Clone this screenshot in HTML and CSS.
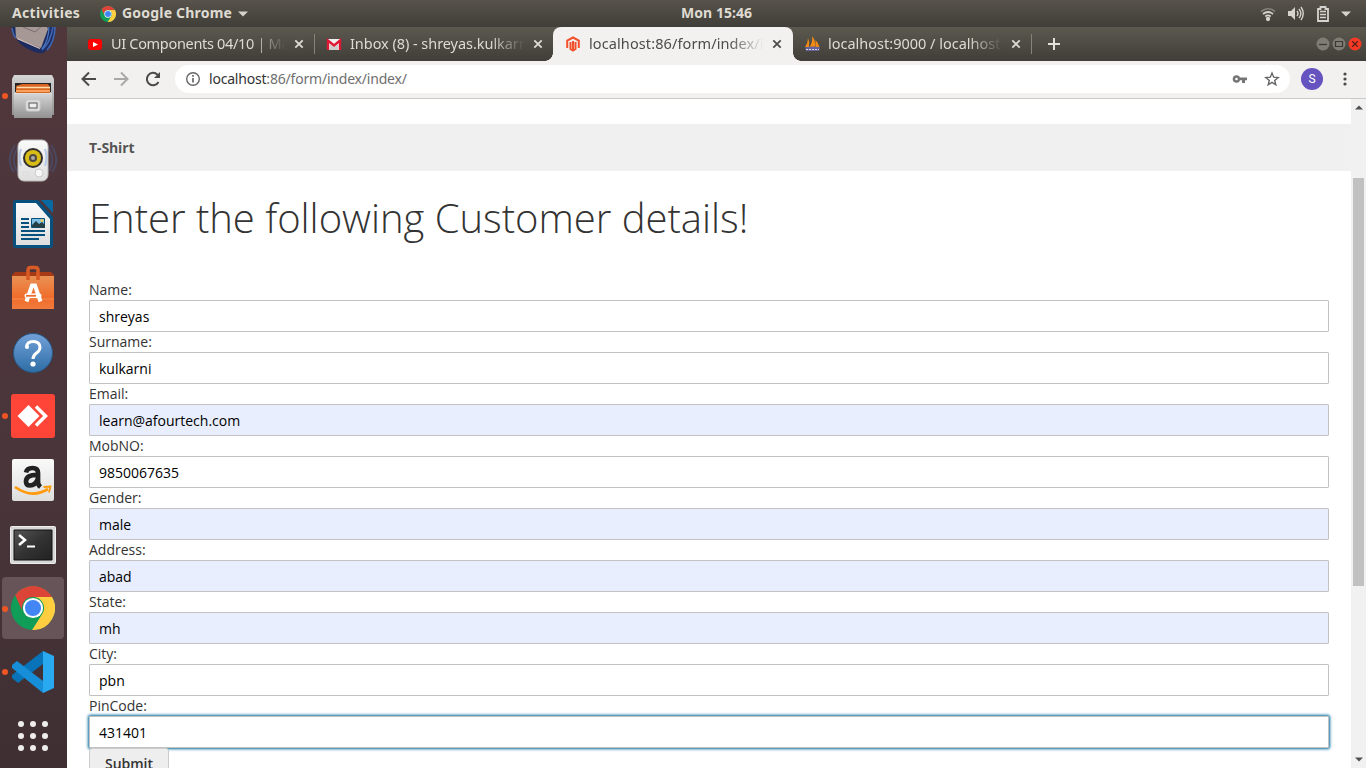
FILE: index.html
```html
<!DOCTYPE html>
<html lang="en">
<head>
<meta charset="utf-8">
<title>Customer details</title>
<link rel="stylesheet" href="styles.css">
</head>
<body>
<svg class="defs" width="0" height="0" aria-hidden="true">
  <defs>
    <linearGradient id="metal" x2="0" y2="1"><stop stop-color="#d6d6d6"/><stop offset="1" stop-color="#929292"/></linearGradient>
    <linearGradient id="blue" x2="0" y2="1"><stop stop-color="#73a1d9"/><stop offset="1" stop-color="#2e6da5"/></linearGradient>
    <linearGradient id="orange" x2="0" y2="1"><stop stop-color="#e99255"/><stop offset=".65" stop-color="#ef6c2b"/><stop offset="1" stop-color="#f17a3c"/></linearGradient>
    <linearGradient id="paper" x2="0" y2="1"><stop stop-color="#fafafa"/><stop offset="1" stop-color="#dedede"/></linearGradient>
    <linearGradient id="screen" x2="1" y2="1"><stop stop-color="#555"/><stop offset=".5" stop-color="#333"/><stop offset="1" stop-color="#222"/></linearGradient>
    <symbol id="chrome" viewBox="0 0 48 48">
      <circle cx="24" cy="24" r="24" fill="#109d58"/>
      <path d="M4.500 10A24 24 0 0 1 44.800 12H24A12 12 0 0 0 13.600 30z" fill="#db4437"/>
      <path d="M44.800 12A24 24 0 0 1 23 48L34.400 30A12 12 0 0 0 24 12z" fill="#ffcd40"/>
      <circle cx="24" cy="24" r="11" fill="#fff"/><circle cx="24" cy="24" r="8.800" fill="#4285f4"/>
    </symbol>
    <symbol id="close" viewBox="0 0 10 10"><path d="M1.300 1.300l7.400 7.400M8.700 1.300L1.300 8.700" stroke="currentColor" stroke-width="1.800"/></symbol>
  </defs>
</svg>

<header class="topbar">
  <span class="activities">Activities</span>
  <svg class="app-icon" width="16" height="16"><use href="#chrome"/></svg>
  <span class="app-name">Google Chrome</span>
  <svg class="caret" width="10" height="6"><path d="M0 .5h10L5 5.500z" fill="#d5d3ce"/></svg>
  <span class="clock">Mon 15:46</span>
  <div class="status">
    <svg width="16" height="16" fill="none" stroke="#d5d3ce" stroke-width="1.700"><path d="M1 5.500q7-5.500 14 0" opacity=".4"/><path d="M3 8q5-4 10 0M5.300 10.500q2.700-2.200 5.400 0"/><circle cx="8" cy="13" r="1.300" fill="#d5d3ce"/></svg>
    <svg width="16" height="16"><path d="M0 5h3l4-4v13l-4-4H0z" fill="#d5d3ce"/><path d="M9 5q2 2.500 0 5M11 3q3.700 4.500 0 9M13 1q4.500 6.500 0 13" fill="none" stroke="#d5d3ce" stroke-width="1.400"/></svg>
    <svg width="12" height="16"><path d="M1 3h2.500V1h5v2H11v12H1z" fill="none" stroke="#d5d3ce" stroke-width="1.800"/><path d="M3 5.500h6M3 8.500h6M3 11.500h6" stroke="#d5d3ce" stroke-width="1.500"/></svg>
    <svg width="10" height="6"><path d="M0 .5h10L5 5.500z" fill="#d5d3ce"/></svg>
  </div>
</header>

<div class="desktop">
<nav class="dock">
  <div class="dock-item"><svg width="46" height="46"><path d="M2 17Q4 34 20 41q7 4 13 3 12-7 12-27H30z" fill="#1d2c60"/><path d="M5 12h30l3 8-7 19L6 29z" fill="#a69895"/><path d="M13 18l12 5 9-8" fill="none" stroke="#796d70"/><path d="M7 29.500l23 10" stroke="#e3c6bc" stroke-width="1.300"/><path d="M2 19q1 7 4 10M43 17q-2 16-11 24M45 17q0 15-8 24" stroke="#3f67b5" stroke-width="1.600" fill="none"/><path d="M39 17q0 14-7 23" stroke="#4d79c5" stroke-width="1.200" fill="none"/></svg></div>
  <div class="dock-item running"><svg width="42" height="46"><path d="M2 2h38l2 4v36H0V6z" fill="url(#metal)"/><path d="M3 10h36v9H3z" fill="#252525"/><path d="M4 13l6-2h26l2 3v7H4z" fill="#da6423"/><path d="M5 14.500h33" stroke="#ffe0ad" stroke-width="1.500"/><path d="M4 18h34" stroke="#f6a25b" stroke-width="2"/><path d="M2 20h38v25H2z" fill="url(#metal)"/><path d="M2 20.500h38" stroke="#ddd"/><rect x="14" y="27" width="14" height="11" rx="2" fill="#ddd" stroke="#ccc"/><rect x="17" y="30" width="8" height="5" fill="#eee" stroke="#555"/></svg></div>
  <div class="dock-item"><svg width="50" height="46"><path d="M7 8Q-3 23 6 35M10 10Q2 23 9 34M43 8q10 15 1 27M40 10q8 13 1 24" fill="none" stroke="#465d8c" stroke-width="2" opacity=".45"/><rect x="10" y="3" width="30" height="41" rx="6" fill="url(#paper)" stroke="#bbb"/><path d="M13 12q-3 8 0 17M37 12q3 8 0 17" fill="none" stroke="#b5c9e5" stroke-width="2"/><circle cx="25" cy="21" r="10" fill="#302f2d"/><circle cx="25" cy="21" r="8" fill="#d8bd18"/><circle cx="25" cy="21" r="4" fill="#504a3e"/><circle cx="25" cy="21" r="2" fill="#aaa"/><circle cx="31" cy="36" r="4" fill="#f6f6f6" stroke="#ccc"/><path d="M15 35h5v4h-5z" fill="none" stroke="#ddd"/></svg></div>
  <div class="dock-item"><svg width="40" height="48"><path d="M3 0h22l15 17v28q0 3-3 3H3q-3 0-3-3V3q0-3 3-3z" fill="#08517e"/><path d="M28 0h10q2 0 2 2v11z" fill="#0869a3"/><path d="M3 3h20l14 16v26H3z" fill="url(#paper)"/><path d="M8 19h8M8 23h8M8 27h8M8 31h24M8 35h24M8 39h18" stroke="#08517e" stroke-width="2"/><path d="M18.500 18.500h13v9h-13z" fill="#7fc0e4" stroke="#08517e"/><path d="M19 27v-2l4-4 3 3 3-2 3 3v3z" fill="#263f46"/><circle cx="29" cy="20.500" r="1.500" fill="#edca57"/></svg></div>
  <div class="dock-item"><svg width="42" height="46"><path d="M0 10l3-3h36l3 3v5H0z" fill="#a63a16"/><path d="M0 11h42v33H0z" fill="url(#orange)"/><path d="M0 34h42" stroke="#f58b51"/><path d="M16 15V5Q16 2.500 19 2.500h4q3 0 3 2.500V15" fill="none" stroke="#d95a25" stroke-width="3.500"/><path d="M14.500 36.500L20 20.500h3L28.500 36.500" fill="none" stroke="#fff" stroke-width="4"/><rect x="12.500" y="28.500" width="17" height="4.500" rx="2" fill="#fff"/><path d="M14 30.800h10" stroke="#ef6c2b" stroke-width="1.800"/></svg></div>
  <div class="dock-item"><svg width="42" height="42"><circle cx="21" cy="22" r="19.500" fill="url(#blue)" stroke="#285887"/><path d="M14.500 16Q15 10.500 21 10.500q7 0 7 6 0 3-3.500 5.500-3.500 2.400-3.500 6" fill="none" stroke="#fff" stroke-width="3"/><circle cx="15" cy="16" r="2" fill="#fff"/><circle cx="21" cy="33" r="2.600" fill="#fff"/></svg></div>
  <div class="dock-item running"><svg width="44" height="44"><rect width="44" height="44" rx="3" fill="#ff4538"/><path d="M6.500 22L17.500 11l11 11-11 11z" fill="#fff"/><path d="M25 12.500l9.500 9.500-9.500 9.500" fill="none" stroke="#fff" stroke-width="3.500"/></svg></div>
  <div class="dock-item"><svg width="42" height="42"><rect width="42" height="42" rx="2" fill="url(#paper)"/><path d="M14 13.500Q15 9 20.500 9 26 9 26 14v9q0 3 2.500 5M26 16q-12-.5-12 6.500 0 4 4 4 5.500 0 8-7" fill="none" stroke="#222" stroke-width="4.700"/><path d="M3 28q17 12 33 2" fill="none" stroke="#ff9a0b" stroke-width="2.700"/><path d="M31.500 28l7-.5-1.500 6" fill="none" stroke="#ff9a0b" stroke-width="1.800"/></svg></div>
  <div class="dock-item lowered"><svg width="46" height="38"><rect x=".5" y=".5" width="45" height="37" rx="1" fill="#d7d7d7" stroke="#eee"/><path d="M4 4h38v30H4z" fill="url(#screen)" stroke="#111"/><path d="M9 9l6 5-6 5" fill="none" stroke="#fff" stroke-width="2.500"/><path d="M17 20.500h8" stroke="#fff" stroke-width="2"/></svg></div>
  <div class="dock-item running active"><svg width="44" height="44"><use href="#chrome"/></svg></div>
  <div class="dock-item running"><svg width="42" height="42"><path d="M31 0v13L6 32l-6-5v-3z" fill="#0873b9"/><path d="M0 14l5-4 26 20v12L0 17z" fill="#168ed8"/><path d="M31 0l11 5v32l-11 5z" fill="#28a9f0"/></svg></div>
  <div class="dock-item"><svg width="32" height="32" fill="#f0eeec"><circle cx="4" cy="4" r="3"/><circle cx="16" cy="4" r="3"/><circle cx="28" cy="4" r="3"/><circle cx="4" cy="16" r="3"/><circle cx="16" cy="16" r="3"/><circle cx="28" cy="16" r="3"/><circle cx="4" cy="28" r="3"/><circle cx="16" cy="28" r="3"/><circle cx="28" cy="28" r="3"/></svg></div>
</nav>

<section class="browser">
  <div class="tabs">
    <div class="tab divided">
      <svg width="16" height="16"><rect x="1" y="3" width="14" height="11" rx="3" fill="#f00"/><path d="M6 6l5 2.500L6 11z" fill="#fff"/></svg>
      <span class="tab-title"><span class="t1">UI Components 04/10 | Ma</span></span><svg class="close" width="10" height="10"><use href="#close"/></svg>
    </div>
    <div class="tab">
      <svg width="16" height="16"><path d="M1 3h14v11H1z" fill="#f3f1ef"/><path d="M4 14V8l4 3 4-3v6z" fill="#d0cecc"/><path d="M2 14V4.500l6 5 6-5V14" fill="none" stroke="#df1735" stroke-width="2.400"/></svg>
      <span class="tab-title"><span class="t2">Inbox (8) - shreyas.kulkarn</span></span><svg class="close" width="10" height="10"><use href="#close"/></svg>
    </div>
    <div class="tab selected">
      <svg width="16" height="16"><path d="M2.200 12V4.700L8 1.500l5.800 3.200V12M5.500 6v7L8 14.500l2.500-1.500V6M8 5v9" fill="none" stroke="#f3502c" stroke-width="2"/></svg>
      <span class="tab-title"><span class="t3">localhost:86/form/index/i</span></span><svg class="close" width="10" height="10"><use href="#close"/></svg>
    </div>
    <div class="tab divided">
      <svg width="16" height="16"><path d="M1 11Q4 7 4 2q2 4 1 9zM5.500 11Q9 6 8 0q4 5 3 11zM11.500 11V4q3 3 4 7z" fill="#f28b16"/><path d="M1 11.500q8-2 15 0l-1 3.500H2z" fill="#66639a"/><path d="M2 13.500h13" stroke="#d7d4e2" stroke-dasharray="2 1"/></svg>
      <span class="tab-title"><span class="t4">localhost:9000 / localhost</span></span><svg class="close" width="10" height="10"><use href="#close"/></svg>
    </div>
    <svg class="new-tab" width="12" height="12"><path d="M6 0v12M0 6h12" stroke="#e4e1d8" stroke-width="2"/></svg>
    <div class="window-buttons">
      <svg width="14" height="14"><circle cx="7" cy="7" r="6.500" fill="#7e7c73"/><path d="M3 7.500h8" stroke="#393832" stroke-width="1.200"/></svg>
      <svg width="14" height="14"><circle cx="7" cy="7" r="6.500" fill="#7e7c73"/><path d="M3.500 4.500h7v5h-7z" fill="none" stroke="#393832" stroke-width="1.200"/></svg>
      <svg width="14" height="14"><circle cx="7" cy="7" r="6.500" fill="#f43a24"/><path d="M4.200 4.200l5.600 5.600M9.800 4.200L4.200 9.800" stroke="#5b2119" stroke-width="1.300"/></svg>
    </div>
  </div>

  <div class="toolbar">
    <svg width="16" height="16" fill="none" stroke="#4a4a4a" stroke-width="2"><path d="M15 8H2M8 1.500L1.500 8 8 14.500"/></svg>
    <svg width="16" height="16" fill="none" stroke="#a9a8a7" stroke-width="2"><path d="M1 8h13M8 1.500L14.500 8 8 14.500"/></svg>
    <svg width="16" height="16"><path d="M13.500 11A6.200 6.200 0 1 1 12.500 3.700L14 5.300" fill="none" stroke="#4a4a4a" stroke-width="2"/><path d="M15 1v6H9z" fill="#4a4a4a"/></svg>
    <div class="omnibox">
      <svg width="16" height="16"><circle cx="8" cy="8" r="6.300" fill="none" stroke="#666" stroke-width="1.400"/><path d="M8 7v4.500M8 4v1.700" stroke="#666" stroke-width="1.700"/></svg>
      <span class="url"><b>localhost</b>:86/form/index/index/</span>
      <svg class="key" width="16" height="16"><path d="M4.500 4.200a3.800 3.800 0 1 0 3.600 5H10V12h3V9.200h2V6.500H8.100a3.800 3.800 0 0 0-3.600-2.300zm0 2.500a1.300 1.300 0 1 1 0 2.600 1.300 1.300 0 0 1 0-2.600z" fill="#757575" fill-rule="evenodd"/></svg>
      <svg width="16" height="16"><path d="M8 2l1.700 4.200 4.500.3-3.500 2.900 1.100 4.400L8 11.400l-3.800 2.400 1.100-4.400-3.500-2.900 4.500-.3z" fill="none" stroke="#666" stroke-width="1.400"/></svg>
    </div>
    <span class="avatar">S</span>
    <svg class="more" width="4" height="14" fill="#4a4a4a"><circle cx="2" cy="2" r="1.600"/><circle cx="2" cy="7" r="1.600"/><circle cx="2" cy="12" r="1.600"/></svg>
  </div>

  <div class="viewport">
    <main class="page">
      <div class="crumbs">T-Shirt</div>
      <form class="content">
        <h1>Enter the following Customer details!</h1>
        <label>Name:</label><input class="field" type="text" value="shreyas">
        <label>Surname:</label><input class="field" type="text" value="kulkarni">
        <label>Email:</label><input class="field filled" type="text" value="learn@afourtech.com">
        <label>MobNO:</label><input class="field" type="text" value="9850067635">
        <label>Gender:</label><input class="field filled" type="text" value="male">
        <label>Address:</label><input class="field filled" type="text" value="abad">
        <label>State:</label><input class="field filled" type="text" value="mh">
        <label>City:</label><input class="field" type="text" value="pbn">
        <label>PinCode:</label><input class="field focused" type="text" value="431401">
        <button class="submit" type="button">Submit</button>
      </form>
    </main>
    <div class="scrollbar">
      <svg width="8" height="5"><path d="M0 4.500h8L4 .5z" fill="#505050"/></svg>
      <div class="track"><div class="thumb"></div></div>
      <svg width="8" height="5"><path d="M0 .5h8L4 4.500z" fill="#505050"/></svg>
    </div>
  </div>
</section>
</div>
</body>
</html>
```

FILE: styles.css
```css
* { box-sizing: border-box; }
html, body { width: 1366px; height: 768px; margin: 0; overflow: hidden; }
body { display: flex; flex-direction: column; font-family: "Open Sans", "Noto Sans", sans-serif; }
svg { display: block; flex: none; }
.defs { position: absolute; }

.topbar { position: relative; height: 27px; flex: none; display: flex; align-items: center; padding: 0 15px 0 12px; background: linear-gradient(#57534b, #403e38); color: #dfdbd2; font: 700 14px/25px "Noto Sans", sans-serif; white-space: nowrap; }
.activities, .app-name { height: 27px; }
.activities { width: 88px; letter-spacing: .32px; }
.app-icon { margin-right: 6px; }
.app-name { width: 111px; letter-spacing: .2px; }
.caret { margin-left: 5px; }
.clock { position: absolute; left: 681px; top: 0; letter-spacing: .05px; }
.status { margin-left: auto; display: flex; align-items: center; gap: 13px; }
.status svg:nth-child(2) { margin-left: -1px; }
.status svg:nth-child(4) { margin-left: -1px; }

.desktop { flex: 1; min-height: 0; display: flex; }
.dock { width: 67px; flex: none; display: flex; flex-direction: column; overflow: hidden; background: linear-gradient(#50373c, #49353a 60%, #3f2f32); }
.dock-item { height: 64px; flex: none; display: flex; align-items: center; justify-content: center; position: relative; }
.dock-item:first-child { margin-top: -27px; }
.dock-item svg { margin-right: 1px; }
.lowered { padding-top: 2px; }
.running::before { content: ""; position: absolute; left: 2px; top: 29px; width: 6px; height: 6px; border-radius: 50%; background: #ee5522; }
.active { height: 62px; margin: 1px 3px 1px 2px; border-radius: 4px; background: #665458; }
.active::before { left: 0; }
.active svg { margin-right: 0; }

.browser { flex: 1; min-width: 0; display: flex; flex-direction: column; }
.tabs { height: 34px; flex: none; display: flex; align-items: center; padding-left: 8px; background: linear-gradient(#5b594f, #403e38); }
.tab { position: relative; width: 239px; height: 34px; flex: none; display: flex; align-items: center; padding: 0 10px 0 12px; color: #dfdbd2; }
.tab-title { width: 175px; height: 34px; margin-left: 8px; margin-right: auto; overflow: hidden; white-space: nowrap; font: 14.5px/32px "Noto Sans", sans-serif; -webkit-mask-image: linear-gradient(90deg, #000 80%, transparent); mask-image: linear-gradient(90deg, #000 80%, transparent); }
.close { color: #dfdbd2; }
.t1 { letter-spacing: -.32px; }
.t2 { letter-spacing: -.05px; }
.t3 { letter-spacing: .1px; }
.t4 { letter-spacing: 0; }
.divided::after { content: ""; position: absolute; right: -1px; top: 7px; width: 1px; height: 20px; background: #858378; }
.selected { width: 240px; margin-right: -1px; padding-right: 11px; background: #f2f1f0; border-radius: 8px 8px 0 0; color: #4c4c4c; }
.selected .close { color: #4c4c4c; }
.selected::before, .selected::after { content: ""; position: absolute; bottom: 0; width: 8px; height: 8px; }
.selected::before { left: -8px; background: radial-gradient(circle at 0 0, transparent 7.5px, #f2f1f0 8px); }
.selected::after { right: -8px; background: radial-gradient(circle at 100% 0, transparent 7.5px, #f2f1f0 8px); }
.new-tab { margin-left: 17px; }
.window-buttons { margin-left: auto; display: flex; gap: 2px; padding-right: 4px; }

.toolbar { height: 38px; flex: none; display: flex; align-items: center; gap: 16px; padding: 0 19px 1px 14px; background: #f2f1f0; border-bottom: 1px solid #cbcac9; }
.omnibox { flex: 1; height: 28px; display: flex; align-items: center; padding: 0 10px; margin-left: -2px; margin-right: -5px; background: #fff; border-radius: 14px; color: #6f6f6f; font: 14px/28px "Noto Sans", sans-serif; }
.url { margin-left: 8px; letter-spacing: -.2px; }
.url b { font-weight: 400; color: #333; }
.key { margin-left: auto; margin-right: 16px; }
.avatar { width: 22px; height: 22px; border-radius: 50%; background: #6554c0; color: #fff; font: 12px/22px Roboto, sans-serif; text-align: center; }
.more { margin-left: 4px; }

.viewport { flex: 1; min-height: 0; display: flex; background: #fff; }
.page { flex: 1; min-width: 0; overflow: hidden; padding-top: 25px; }
.crumbs { height: 47px; padding-left: 22px; background: #f0f0f0; color: #555; font: 700 14px/47px "Open Sans", sans-serif; letter-spacing: -.1px; }
.content { padding: 25px 22px 0; }
h1 { height: 44px; margin: 0 0 40px; color: #333; font: 300 40px/44px "Open Sans", sans-serif; letter-spacing: -.02px; white-space: nowrap; }
label { display: block; height: 20px; color: #333; font-size: 14px; line-height: 20px; }
.field { display: block; width: 100%; height: 32px; padding: 0 9px; border: 1px solid #c2c2c2; border-radius: 1px; background: #fff; color: #000; font: 14px/20px "Open Sans", sans-serif; outline: 0; }
.filled { background: #e8eefe; }
.focused { box-shadow: 0 0 3px 1px #006b9f; }
.submit { position: relative; display: block; width: 80px; height: 32px; padding: 0; border: 1px solid #ccc; border-radius: 3px; background: #eee; color: #333; font: 600 14px/30px "Open Sans", sans-serif; }
.scrollbar { width: 15px; flex: none; display: flex; flex-direction: column; align-items: center; padding: 6px 0; background: #f1f1f1; }
.track { flex: 1; width: 11px; padding-top: 68px; }
.thumb { height: 408px; background: #c1c1c1; }
```
